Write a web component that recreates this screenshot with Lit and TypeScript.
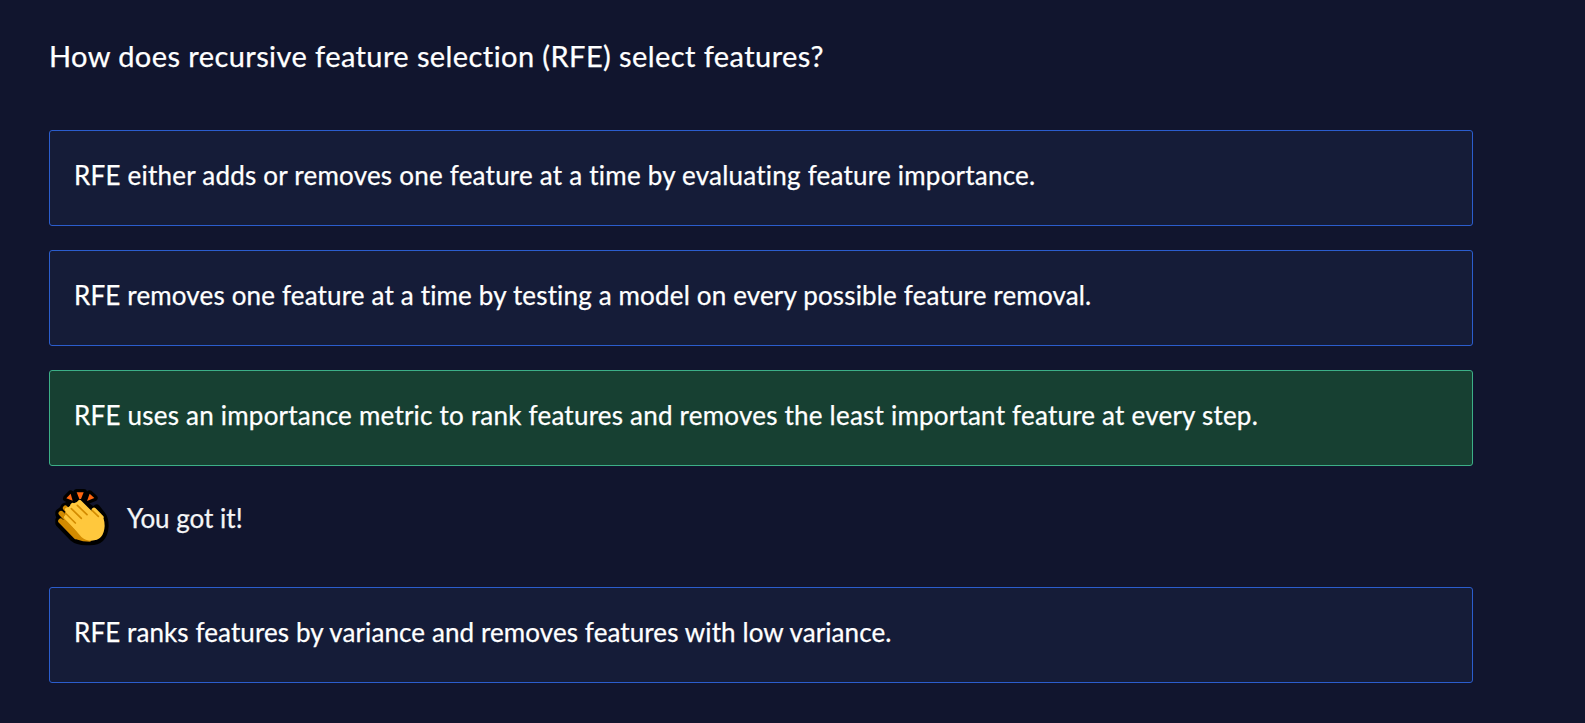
import { LitElement, html, css, svg } from "lit";
import { customElement, property } from "lit/decorators.js";

const hand = svg`
  <path d="M62 123L108 170M63 100L110 150M76 84L110 120" stroke-width="15" />
  <path d="M62 123L90 120L150 160L150 183Q128 183 112 176Z" stroke-width="5" />
`;

const palm = svg`
  <path d="M119 67L160 108M98 76L140 120M82 89L130 138M79 112L128 160M162 90L184 112" stroke-width="14" />
  <path d="M98 76L119 67L155 104L162 90L179 106Q190 115 190 138Q188 178 154 178Q138 178 126 167L79 112L82 89Z" stroke-width="8" />
`;

const sparks = svg`
  <path d="M110 37H131L123 57H118Z" />
  <path d="M79 55L92 41L98 62Z" />
  <path d="M149 41L163 54L141 63Z" />
`;

@customElement("clap-icon")
class ClapIcon extends LitElement {
  static styles = css`
    :host { display: block; width: 55px; height: 60px; flex: none; }
    .icon { display: block; width: 100%; height: 100%; stroke-linecap: round; stroke-linejoin: round; }
    .outline { fill: #000; stroke: #000; stroke-width: 20px; }
    .back { fill: #d38b00; stroke: #d38b00; }
    .front { fill: #ffc83d; stroke: #ffc83d; }
    .creases { fill: none; stroke: #d38b00; stroke-width: 5px; }
    .sparks { fill: #ff6510; }
  `;

  render() {
    return html`<svg class="icon" viewBox="45 21 165 180" aria-hidden="true">
      <g class="outline">
        ${sparks}
        <path d="M119 62L160 91L170 83L186 103Q196 115 196 138Q193 186 149 186H138Q112 186 98 174L56 130V120L60 112L56 103V97L68 88L72 80L91 72L100 70Z" />
      </g>
      <g class="back">${hand}</g>
      <g class="front">${palm}</g>
      <g class="creases">
        <path d="M112 76L141 104M94 86L124 115M76 99L106 129M157 92L175 109" />
      </g>
      <g class="sparks">${sparks}</g>
    </svg>`;
  }
}

@customElement("answer-option")
class AnswerOption extends LitElement {
  @property({ type: Boolean, reflect: true }) correct = false;
  @property() label = "";

  static styles = css`
    :host { display: block; }
    .card {
      box-sizing: border-box; height: 96px; padding: 26px 24px;
      border: 1px solid #2b5dcd; border-radius: 3px; background: #151c38;
      color: #fff; line-height: 37px; white-space: nowrap;
    }
    :host([correct]) .card { background: #174032; border-color: #3caf87; }
  `;

  render() {
    return html`<div class="card">${this.label}</div>`;
  }
}

@customElement("app-root")
class AppRoot extends LitElement {
  static styles = css`
    :host {
      display: block; box-sizing: border-box; height: 723px; overflow: hidden;
      padding: 36px 112px 0 49px; background: #11152e; color: #fff;
      font: 26px/36px Lato, "Open Sans", sans-serif;
      -webkit-text-stroke: 0.25px currentColor;
    }
    .question { margin: 0 0 54px; font-size: 29px; line-height: 40px; font-weight: 400; white-space: nowrap; letter-spacing: 0.42px; }
    .options { display: flex; flex-direction: column; gap: 24px; }
    .feedback { display: flex; align-items: center; gap: 17px; height: 60px; padding-left: 6px; margin: -3px 0 16px; color: #f5f5f7; }
    .message { padding-top: 2px; }
    .first { letter-spacing: 0.225px; }
    .second { letter-spacing: 0.16px; }
    .third { letter-spacing: 0.22px; }
    .fourth { letter-spacing: 0.1px; }
  `;

  render() {
    return html`
      <h1 class="question">How does recursive feature selection (RFE) select features?</h1>
      <div class="options">
        <answer-option class="first" label="RFE either adds or removes one feature at a time by evaluating feature importance."></answer-option>
        <answer-option class="second" label="RFE removes one feature at a time by testing a model on every possible feature removal."></answer-option>
        <answer-option class="third" correct label="RFE uses an importance metric to rank features and removes the least important feature at every step."></answer-option>
        <div class="feedback"><clap-icon></clap-icon><span class="message">You got it!</span></div>
        <answer-option class="fourth" label="RFE ranks features by variance and removes features with low variance."></answer-option>
      </div>
    `;
  }
}
